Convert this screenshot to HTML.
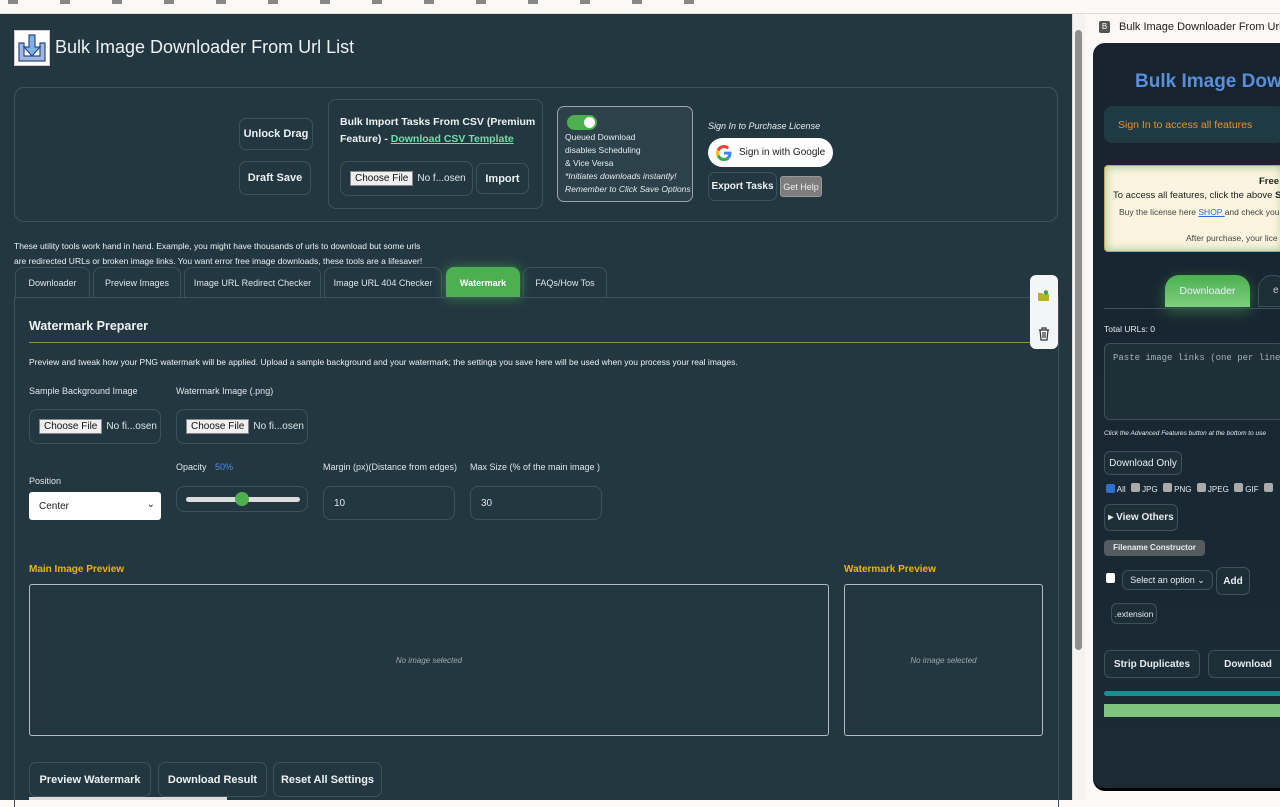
<!DOCTYPE html>
<html><head><meta charset="utf-8"><style>
*{box-sizing:border-box;margin:0;padding:0}
body{width:1280px;height:800px;overflow:hidden;background:#fcf8f5;font-family:"Liberation Sans",sans-serif;position:relative;color:#e6ecef}
.a{position:absolute}
.main{left:0;top:14px;width:1072px;height:786px;background:#233740}
.btn{position:absolute;border:1px solid #3d525b;border-radius:7px;color:#eef2f3;font-weight:bold;font-size:11px;display:flex;align-items:center;justify-content:center;background:#233740}
.t{position:absolute;white-space:nowrap}
.tab{position:absolute;top:267px;height:31px;border:1px solid #3d525b;border-bottom:none;border-radius:8px 8px 0 0;font-size:9px;color:#dfe6e9;display:flex;align-items:center;justify-content:center}
.fb{position:absolute;border:1px solid #3d525b;border-radius:8px;display:flex;align-items:center;padding-left:9px;font-size:10px;color:#dfe6e9}
.cf{background:#efefef;color:#111;border:1px solid #888;padding:1px 4px;font-size:10px;margin-right:4px}
.lbl{position:absolute;font-size:9px;color:#dfe6e9;white-space:nowrap}
.rb{position:absolute;border:1px solid #3d525b;border-radius:6px;background:#1e2e36;color:#e6ecef;font-weight:bold;font-size:10px;display:flex;align-items:center;justify-content:center}
</style></head><body>
<div class="a" style="left:0;top:0;width:1280px;height:14px;background:#fcf8f5;border-bottom:1px solid #ddd"></div>
<div class="a" style="left:8px;top:0;width:700px;height:4px;background:repeating-linear-gradient(90deg,#888 0 10px,transparent 10px 52px)"></div>
<div class="a main"></div>
<div class="a" style="left:14px;top:30px;width:36px;height:36px;background:#fff;border:1px solid #ccc"><svg width="34" height="34" viewBox="0 0 34 34"><path d="M4 12v18h26V12h-5v13H9V12z" fill="#9fb8e0" stroke="#2a4a8a" stroke-width="1.2"/><path d="M14 4h6v12h5l-8 9-8-9h5z" fill="#7fb0e8" stroke="#2a4a8a" stroke-width="1.2"/></svg></div>
<div class="t" style="left:55px;top:37px;font-size:18px;color:#eef2f3">Bulk Image Downloader From Url List</div>
<div class="a" style="left:14px;top:87px;width:1044px;height:135px;border:1px solid #3d525b;border-radius:10px"></div>
<div class="btn" style="left:239px;top:118px;width:74px;height:32px">Unlock Drag</div>
<div class="btn" style="left:239px;top:161px;width:72px;height:34px">Draft Save</div>
<div class="a" style="left:328px;top:99px;width:215px;height:110px;border:1px solid #3d525b;border-radius:8px"></div>
<div class="t" style="left:340px;top:114px;font-size:10.5px;font-weight:bold;line-height:17px;color:#eef2f3">Bulk Import Tasks From CSV (Premium<br>Feature) - <span style="color:#6fe0a8;text-decoration:underline">Download CSV Template</span></div>
<div class="fb" style="left:340px;top:161px;width:133px;height:35px"><span class="cf">Choose File</span>No f...osen</div>
<div class="btn" style="left:476px;top:163px;width:53px;height:31px">Import</div>
<div class="a" style="left:557px;top:106px;width:136px;height:96px;border:1px solid #9aa5aa;border-radius:7px;background:#2d414a"></div>
<div class="a" style="left:567px;top:115px;width:30px;height:15px;border-radius:8px;background:#4caf50"><div class="a" style="right:2px;top:2px;width:11px;height:11px;border-radius:50%;background:#fff"></div></div>
<div class="t" style="left:565px;top:131px;font-size:8.5px;line-height:13px;color:#e6ecef">Queued Download<br>disables Scheduling<br>&amp; Vice Versa<br><i>*Initiates downloads instantly!<br>Remember to Click Save Options</i></div>
<div class="t" style="left:708px;top:121px;font-size:9px;font-style:italic;color:#e6ecef">Sign In to Purchase License</div>
<div class="a" style="left:708px;top:138px;width:125px;height:29px;border-radius:15px;background:#fff;display:flex;align-items:center;padding-left:8px;font-size:10px;color:#222"><svg width="16" height="16" viewBox="0 0 48 48" style="margin-right:7px"><path fill="#EA4335" d="M24 9.5c3.5 0 6.6 1.2 9 3.5l6.7-6.7C35.6 2.4 30.2 0 24 0 14.6 0 6.6 5.4 2.7 13.3l7.8 6C12.4 13.7 17.7 9.5 24 9.5z"/><path fill="#4285F4" d="M46.5 24.5c0-1.6-.1-3.1-.4-4.5H24v9h12.7c-.6 3-2.3 5.5-4.8 7.200l7.6 5.9c4.4-4.1 7-10.1 7-17.6z"/><path fill="#FBBC05" d="M10.5 28.7c-.5-1.4-.8-3-.8-4.7s.3-3.2.8-4.7l-7.8-6C1 16.6 0 20.2 0 24s1 7.4 2.7 10.7z"/><path fill="#34A853" d="M24 48c6.5 0 11.9-2.1 15.9-5.8l-7.6-5.9c-2.1 1.4-4.9 2.3-8.3 2.3-6.3 0-11.6-4.2-13.5-9.9l-7.8 6C6.6 42.6 14.6 48 24 48z"/></svg>Sign in with Google</div>
<div class="btn" style="left:708px;top:172px;width:69px;height:29px;font-size:10px">Export Tasks</div>
<div class="a" style="left:780px;top:176px;width:42px;height:21px;background:#7d7d7d;border:1px solid #999;border-radius:3px;font-size:9px;color:#eee;display:flex;align-items:center;justify-content:center">Get Help</div>
<div class="t" style="left:14px;top:239px;font-size:8.5px;line-height:15px;color:#eef2f3">These utility tools work hand in hand. Example, you might have thousands of urls to download but some urls<br>are redirected URLs or broken image links. You want error free image downloads, these tools are a lifesaver!</div>
<div class="tab" style="left:15px;width:75px">Downloader</div>
<div class="tab" style="left:93px;width:88px">Preview Images</div>
<div class="tab" style="left:184px;width:137px">Image URL Redirect Checker</div>
<div class="tab" style="left:324px;width:118px">Image URL 404 Checker</div>
<div class="tab" style="left:446px;width:74px;background:#4caf50;border-color:#4caf50;color:#fff;font-weight:bold;box-shadow:0 0 12px rgba(76,175,80,.6)">Watermark</div>
<div class="tab" style="left:523px;width:84px">FAQs/How Tos</div>
<div class="a" style="left:14px;top:297px;width:1045px;height:510px;border-left:1px solid #3d525b;border-right:1px solid #3d525b;border-top:1px solid #3d525b"></div>
<div class="t" style="left:29px;top:319px;font-size:12.5px;font-weight:bold;color:#eef2f3">Watermark Preparer</div>
<div class="a" style="left:29px;top:342px;width:1014px;height:1px;background:#9a8a40"></div>
<div class="t" style="left:29px;top:357px;font-size:8.5px;color:#eef2f3">Preview and tweak how your PNG watermark will be applied. Upload a sample background and your watermark; the settings you save here will be used when you process your real images.</div>
<div class="lbl" style="left:29px;top:386px">Sample Background Image</div>
<div class="lbl" style="left:176px;top:386px">Watermark Image (.png)</div>
<div class="fb" style="left:29px;top:409px;width:132px;height:35px"><span class="cf">Choose File</span>No fi...osen</div>
<div class="fb" style="left:176px;top:409px;width:132px;height:35px"><span class="cf">Choose File</span>No fi...osen</div>
<div class="lbl" style="left:29px;top:476px">Position</div>
<div class="a" style="left:29px;top:492px;width:132px;height:28px;background:#fff;border-radius:3px;color:#222;font-size:10px;padding:9px 0 0 10px">Center<span style="position:absolute;right:6px;top:7px;font-size:10px">&#8964;</span></div>
<div class="lbl" style="left:176px;top:462px">Opacity <span style="color:#4a8ee0;margin-left:6px">50%</span></div>
<div class="fb" style="left:176px;top:486px;width:132px;height:26px;padding:0"><div class="a" style="left:9px;top:10px;width:114px;height:5px;background:#ddd;border-radius:3px"></div><div class="a" style="left:58px;top:5px;width:14px;height:14px;border-radius:50%;background:#4caf50"></div></div>
<div class="lbl" style="left:323px;top:462px">Margin (px)(Distance from edges)</div>
<div class="fb" style="left:323px;top:486px;width:132px;height:34px;padding-left:10px">10</div>
<div class="lbl" style="left:470px;top:462px">Max Size (% of the main image )</div>
<div class="fb" style="left:470px;top:486px;width:132px;height:34px;padding-left:10px">30</div>
<div class="t" style="left:29px;top:564px;font-size:10px;font-weight:bold;color:#f0b400">Main Image Preview</div>
<div class="t" style="left:844px;top:564px;font-size:10px;font-weight:bold;color:#f0b400">Watermark Preview</div>
<div class="a" style="left:29px;top:584px;width:800px;height:152px;border:1px solid #b5bcc0;border-radius:3px;display:flex;align-items:center;justify-content:center;font-size:8px;font-style:italic;color:#a0a8ac">No image selected</div>
<div class="a" style="left:844px;top:584px;width:199px;height:152px;border:1px solid #b5bcc0;border-radius:3px;display:flex;align-items:center;justify-content:center;font-size:8px;font-style:italic;color:#a0a8ac">No image selected</div>
<div class="btn" style="left:29px;top:762px;width:122px;height:35px">Preview Watermark</div>
<div class="btn" style="left:158px;top:762px;width:109px;height:35px">Download Result</div>
<div class="btn" style="left:273px;top:762px;width:109px;height:35px">Reset All Settings</div>
<div class="a" style="left:29px;top:797px;width:198px;height:3px;background:#ddd"></div>
<div class="a" style="left:1030px;top:275px;width:28px;height:74px;background:#f3f5f6;border-radius:6px"></div>
<svg class="a" style="left:1037px;top:290px" width="14" height="12" viewBox="0 0 14 12"><path d="M1 3h4l1 1h6v7H1z" fill="#b8b030"/><circle cx="9" cy="2.5" r="2.2" fill="#2da84a"/></svg>
<svg class="a" style="left:1038px;top:327px" width="12" height="14" viewBox="0 0 12 14"><path d="M1 3h10M4 3V1h4v2M2 3l1 10h6l1-10M5 5v6M7 5v6" fill="none" stroke="#333" stroke-width="1.2"/></svg>
<div class="a" style="left:1072px;top:14px;width:13px;height:786px;background:#f5f3f1;border-left:1px solid #ddd"></div>
<div class="a" style="left:1075px;top:30px;width:7px;height:620px;background:#8f8f8f;border-radius:4px"></div>
<div class="a" style="left:1099px;top:21px;width:11px;height:12px;background:#555;border-radius:2px;color:#fff;font-size:8px;text-align:center;line-height:12px">B</div>
<div class="t" style="left:1119px;top:21px;font-size:11px;color:#222">Bulk Image Downloader From Url List</div>
<div class="a" style="left:1093px;top:43px;width:200px;height:748px;background:linear-gradient(#17242f,#1b2a35);border-radius:12px 0 0 12px;border-bottom:3px solid #000"></div>
<div class="t" style="left:1135px;top:71px;font-size:19px;font-weight:bold;color:#5a8fd8">Bulk Image Dow</div>
<div class="a" style="left:1104px;top:106px;width:180px;height:37px;background:#1f3a42;border-radius:8px"></div>
<div class="t" style="left:1118px;top:119px;font-size:10.5px;color:#eb922c">Sign In to access all features</div>
<div class="a" style="left:1104px;top:165px;width:180px;height:87px;background:#fbf4df;border:1px solid #c9a34a;border-radius:4px;box-shadow:inset 0 0 10px #9cc08a"></div>
<div class="t" style="left:1259px;top:176px;font-size:9.5px;font-weight:bold;color:#222">Free</div>
<div class="t" style="left:1113px;top:190px;font-size:9.5px;color:#222">To access all features, click the above <b>Si</b></div>
<div class="t" style="left:1119px;top:207px;font-size:8.5px;color:#444">Buy the license here <span style="color:#2a6fd0;text-decoration:underline">SHOP </span>and check you</div>
<div class="t" style="left:1186px;top:233px;font-size:8.5px;color:#444">After purchase, your lice</div>
<div class="a" style="left:1165px;top:275px;width:85px;height:32px;background:linear-gradient(#4caf50,#7dd07f);border-radius:14px 14px 0 0;box-shadow:0 4px 14px rgba(76,175,80,.5);color:#eef;font-size:10.5px;display:flex;align-items:center;justify-content:center">Downloader</div>
<div class="a" style="left:1258px;top:275px;width:30px;height:32px;background:#1e2e36;border:1px solid #3d525b;border-radius:14px 14px 0 0;color:#ccc;font-size:10px;padding:9px 0 0 14px">e</div>
<div class="a" style="left:1104px;top:308px;width:180px;height:1px;background:#3d525b"></div>
<div class="t" style="left:1104px;top:324px;font-size:8.5px;color:#e6ecef">Total URLs: 0</div>
<div class="a" style="left:1104px;top:343px;width:180px;height:77px;background:#1e2f37;border:1px solid #3d525b;border-radius:6px;font-family:'Liberation Mono',monospace;font-size:9px;color:#a8b2b8;padding:9px 0 0 8px;white-space:nowrap;overflow:hidden">Paste image links (one per line)</div>
<div class="t" style="left:1104px;top:430px;font-size:6.5px;font-style:italic;color:#e6ecef">Click the Advanced Features button at the bottom to use</div>
<div class="rb" style="left:1104px;top:451px;width:78px;height:24px;font-weight:normal">Download Only</div>
<div class="t" style="left:1106px;top:483px;font-size:8px;color:#e6ecef"><span style="display:inline-block;width:9px;height:9px;background:#2f6fd0;border-radius:2px;vertical-align:-1px"></span> All <span style="display:inline-block;width:9px;height:9px;background:#aaa;border-radius:2px;margin-left:3px"></span> JPG <span style="display:inline-block;width:9px;height:9px;background:#aaa;border-radius:2px;margin-left:3px"></span> PNG <span style="display:inline-block;width:9px;height:9px;background:#aaa;border-radius:2px;margin-left:3px"></span> JPEG <span style="display:inline-block;width:9px;height:9px;background:#aaa;border-radius:2px;margin-left:3px"></span> GIF <span style="display:inline-block;width:9px;height:9px;background:#aaa;border-radius:2px;margin-left:3px"></span></div>
<div class="rb" style="left:1104px;top:504px;width:74px;height:27px">&#9656; View Others</div>
<div class="a" style="left:1104px;top:540px;width:101px;height:16px;background:#555c60;border-radius:4px;color:#e6ecef;font-size:8px;font-weight:bold;text-align:center;line-height:16px">Filename Constructor</div>
<div class="a" style="left:1106px;top:573px;width:9px;height:10px;background:#fff;border-radius:2px"></div>
<div class="rb" style="left:1122px;top:570px;width:91px;height:20px;font-weight:normal;font-size:9px">Select an option &#8964;</div>
<div class="rb" style="left:1216px;top:567px;width:34px;height:28px">Add</div>
<div class="rb" style="left:1111px;top:603px;width:46px;height:21px;font-weight:normal;font-size:8.5px">.extension</div>
<div class="rb" style="left:1104px;top:650px;width:96px;height:28px">Strip Duplicates</div>
<div class="rb" style="left:1208px;top:650px;width:80px;height:28px">Download</div>
<div class="a" style="left:1104px;top:691px;width:180px;height:5px;background:#169090;border-radius:3px"></div>
<div class="a" style="left:1104px;top:704px;width:180px;height:13px;background:#7dc47f"></div>
</body></html>
